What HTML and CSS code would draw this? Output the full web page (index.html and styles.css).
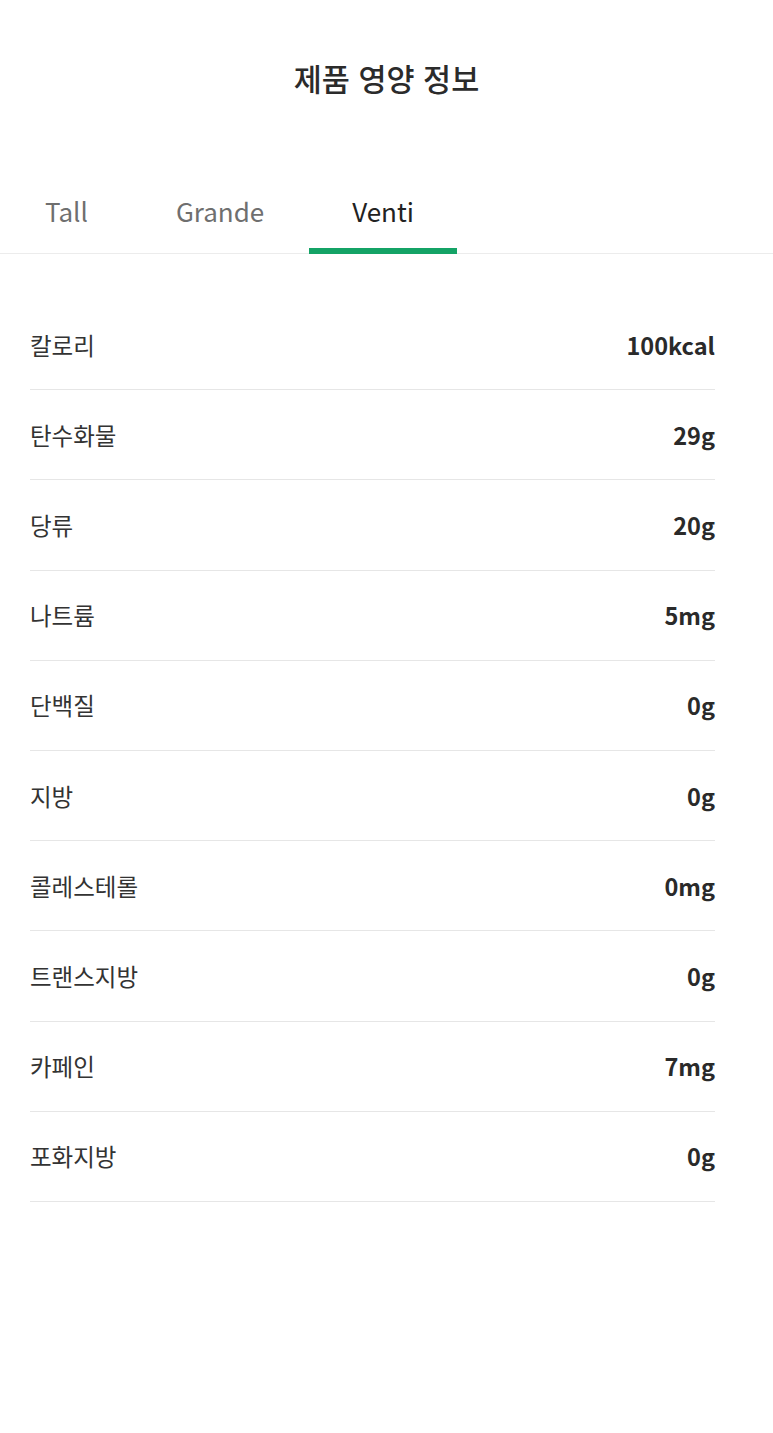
FILE: index.html
```html
<!DOCTYPE html>
<html lang="ko">
<head>
<meta charset="UTF-8">
<meta name="viewport" content="width=device-width, initial-scale=1.0">
<title>제품 영양 정보</title>
<link rel="stylesheet" href="styles.css">
</head>
<body>
<div class="header">제품 영양 정보</div>
<div class="tabs">
    <div class="tab">Tall</div>
    <div class="tab">Grande</div>
    <div class="tab active">Venti</div>
</div>
<div class="list">
    <div class="row"><span class="name">칼로리</span><span class="value">100kcal</span></div>
    <div class="row"><span class="name">탄수화물</span><span class="value">29g</span></div>
    <div class="row"><span class="name">당류</span><span class="value">20g</span></div>
    <div class="row"><span class="name">나트륨</span><span class="value">5mg</span></div>
    <div class="row"><span class="name">단백질</span><span class="value">0g</span></div>
    <div class="row"><span class="name">지방</span><span class="value">0g</span></div>
    <div class="row"><span class="name">콜레스테롤</span><span class="value">0mg</span></div>
    <div class="row"><span class="name">트랜스지방</span><span class="value">0g</span></div>
    <div class="row"><span class="name">카페인</span><span class="value">7mg</span></div>
    <div class="row"><span class="name">포화지방</span><span class="value">0g</span></div>
</div>
</body>
</html>
```

FILE: styles.css
```css
body, html {
    margin: 0;
    padding: 0;
    background: #ffffff;
    color: #333333;
    font-family: "Noto Sans CJK KR", "Noto Sans", sans-serif;
}
.header {
    height: 156px;
    display: flex;
    justify-content: center;
    align-items: center;
    font-size: 30.5px;
    font-weight: 500;
    color: #2b2b2b;
    box-sizing: border-box;
}
.tabs {
    display: flex;
    gap: 2px;
    padding-left: 2px;
    border-bottom: 1px solid #ececec;
    height: 98px;
    box-sizing: border-box;
}
.tab {
    padding: 16px 43px 0 43px;
    display: flex;
    align-items: center;
    font-size: 26px;
    color: #6f6f6f;
    box-sizing: border-box;
    border-bottom: 6px solid transparent;
    margin-bottom: -1px;
}
.tab.active {
    color: #222222;
    border-bottom-color: #14a366;
}
.list {
    margin: 46px 58px 0 30px;
}
.row {
    display: flex;
    justify-content: space-between;
    align-items: center;
    height: 90.2px;
    box-sizing: border-box;
    border-bottom: 1px solid #e6e6e6;
}
.name {
    font-size: 23.5px;
    color: #333333;
}
.value {
    font-size: 23.5px;
    font-weight: 700;
    color: #2a2a2a;
}
```
